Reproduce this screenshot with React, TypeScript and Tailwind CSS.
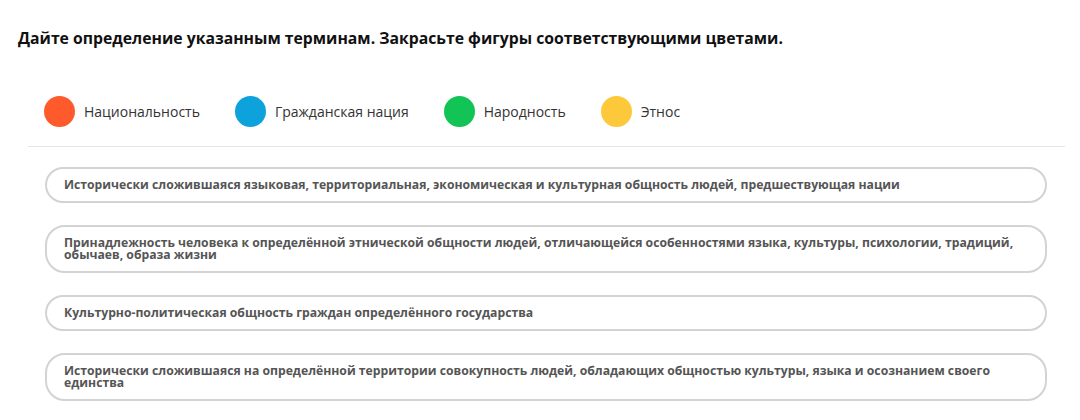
const legend = [
  { label: 'Национальность', color: 'bg-[#ff5a2c]' },
  { label: 'Гражданская нация', color: 'bg-[#0ea2dc]' },
  { label: 'Народность', color: 'bg-[#12c455]' },
  { label: 'Этнос', color: 'bg-[#fdc83a]' },
];

const definitions = [
  'Исторически сложившаяся языковая, территориальная, экономическая и культурная общность людей, предшествующая нации',
  'Принадлежность человека к определённой этнической общности людей, отличающейся особенностями языка, культуры, психологии, традиций, обычаев, образа жизни',
  'Культурно-политическая общность граждан определённого государства',
  'Исторически сложившаяся на определённой территории совокупность людей, обладающих общностью культуры, языка и осознанием своего единства',
];

export default function App() {
  return (
    <div className="w-[1080px] h-[420px] overflow-hidden bg-white font-['Open_Sans',sans-serif]">
      <h1 className="pt-[27px] pl-[18px] text-[15.75px] leading-[22px] font-bold text-[#111]">
        Дайте определение указанным терминам. Закрасьте фигуры соответствующими цветами.
      </h1>

      <div className="mt-[47px] ml-[44px] flex items-center gap-[35px]">
        {legend.map((item) => (
          <div key={item.label} className="flex items-center gap-[9px]">
            <span className={`w-[31px] h-[31px] rounded-full ${item.color}`} />
            <span className="text-[14px] text-[#333]">{item.label}</span>
          </div>
        ))}
      </div>

      <div className="mt-[19px] ml-[28px] w-[1037px] h-px bg-[#e6e6e6]" />

      <div className="mt-[20px] ml-[45px] w-[1002px] flex flex-col gap-[22px]">
        {definitions.map((text) => (
          <div
            key={text}
            className="border-2 border-[#d3d3d3] rounded-[20px] py-[10px] pl-[17px] pr-[24px] text-[12.2px] leading-[12px] font-bold text-[#555]"
          >
            {text}
          </div>
        ))}
      </div>
    </div>
  );
}
